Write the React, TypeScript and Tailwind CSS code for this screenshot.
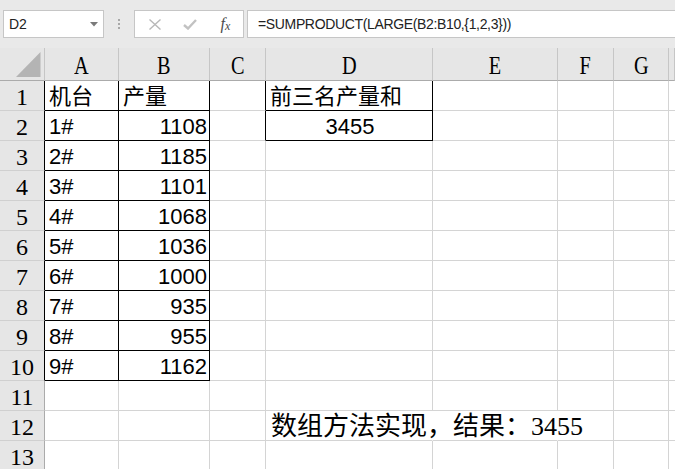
import React from "react";

const COLS = ["A", "B", "C", "D", "E", "F", "G", ""];
const GRID = "grid grid-cols-[45px_74px_91px_56px_167px_125px_56px_55px_1fr]";

const isBlack = (c: number, r: number) =>
  (c >= 1 && c <= 2 && r >= 1 && r <= 10) || (c === 4 && r >= 1 && r <= 2);

const A = ["机台", "1#", "2#", "3#", "4#", "5#", "6#", "7#", "8#", "9#"];
const B = ["产量", "1108", "1185", "1101", "1068", "1036", "1000", "935", "955", "1162"];

const sans = "font-['Liberation_Sans','Noto_Sans_CJK_SC',sans-serif] text-[22px] leading-[22px] text-black";
const serifHead = "font-['Liberation_Serif','Noto_Sans_CJK_SC',serif] text-black";

function Cell({ c, r }: { c: number; r: number }) {
  const rightBlack = isBlack(c, r) || isBlack(c + 1, r);
  const bottomBlack = isBlack(c, r) || isBlack(c, r + 1);
  const hideRight = r === 12 && (c === 4 || c === 5);
  const rc = hideRight ? "border-r-white" : rightBlack ? "border-r-black" : "border-r-[#d4d4d4]";
  const bc = bottomBlack ? "border-b-black" : "border-b-[#d4d4d4]";
  let content: React.ReactNode = null;
  let align = "justify-start";
  if (c === 1 && r >= 1 && r <= 10) content = A[r - 1];
  if (c === 2 && r >= 1 && r <= 10) {
    content = B[r - 1];
    align = r === 1 ? "justify-start" : "justify-end";
  }
  if (c === 4 && r === 1) content = "前三名产量和";
  if (c === 4 && r === 2) {
    content = "3455";
    align = "justify-center";
  }
  if (c === 4 && r === 12) {
    return (
      <div className={`h-[30px] border-r border-b ${rc} ${bc} flex items-end pl-[5px] pb-[0px] whitespace-nowrap overflow-visible relative z-10`}>
        <span className="font-['Liberation_Serif','Noto_Sans_CJK_SC',serif] text-[26px] leading-[26px] text-black">
          数组方法实现，结果：3455
        </span>
      </div>
    );
  }
  return (
    <div className={`h-[30px] border-r border-b ${rc} ${bc} flex items-end ${align} pl-[4px] pr-[2px] pb-[2px] whitespace-nowrap overflow-visible`}>
      {content !== null && <span className={sans}>{content}</span>}
    </div>
  );
}

export default function App() {
  const rows = Array.from({ length: 13 }, (_, i) => i + 1);
  return (
    <div className="w-[675px] h-[469px] overflow-hidden bg-white select-none">
      {/* toolbar */}
      <div className="h-[48px] bg-[#e9e9e9] flex items-start pt-[10px]">
        <div className="ml-[3px] w-[101px] h-[28px] bg-white border border-[#c6c6c6] flex items-center justify-between pl-[5px] pr-[5px]">
          <span className="font-['Liberation_Sans',sans-serif] text-[14px] text-[#222]">D2</span>
          <svg width="8" height="5" viewBox="0 0 8 5">
            <path d="M0 0 L8 0 L4 4.5 Z" fill="#7a7a7a" />
          </svg>
        </div>
        <div className="w-[30px] h-[28px] flex flex-col items-center justify-center gap-[2px]">
          <div className="w-[2px] h-[2px] bg-[#a8a8a8]" />
          <div className="w-[2px] h-[2px] bg-[#a8a8a8]" />
          <div className="w-[2px] h-[2px] bg-[#a8a8a8]" />
        </div>
        <div className="w-[110px] h-[28px] bg-white border border-[#c6c6c6] flex items-center">
          <div className="w-[37px] flex justify-center pl-[2px]">
            <svg width="12" height="11" viewBox="0 0 12 11">
              <path d="M0.5 0.5 L11.5 10.5 M11.5 0.5 L0.5 10.5" stroke="#b8b8b8" strokeWidth="1.4" />
            </svg>
          </div>
          <div className="w-[36px] flex justify-center">
            <svg width="14" height="11" viewBox="0 0 14 11">
              <path d="M1 6 L5 9.5 L13 1" stroke="#c2c2c2" strokeWidth="2.4" fill="none" />
            </svg>
          </div>
          <div className="w-[35px] flex justify-center items-end font-['Liberation_Serif',serif] italic text-[#4a4a4a]">
            <span className="text-[16px] leading-[16px]">f</span>
            <span className="text-[12px] leading-[12px]">x</span>
          </div>
        </div>
        <div className="ml-[3px] flex-1 -mr-[3px] h-[28px] bg-white border border-[#c6c6c6] flex items-center pl-[10px]">
          <span className="font-['Liberation_Sans',sans-serif] text-[14px] tracking-[-0.35px] text-[#222] whitespace-nowrap">
            =SUMPRODUCT(LARGE(B2:B10,{"{"}1,2,3{"}"}))
          </span>
        </div>
      </div>

      {/* column headers */}
      <div className={`${GRID} h-[33px] bg-[#e6e6e6]`}>
        <div className="border-r border-r-[#c6c6c6] border-b border-b-[#ababab] relative">
          <svg className="absolute left-[16px] top-[4px]" width="25" height="26" viewBox="0 0 25 26">
            <path d="M24.5 0 L24.5 25 L0 25 Z" fill="#b4b4b4" />
          </svg>
        </div>
        {COLS.map((l, i) => (
          <div
            key={i}
            className="border-r border-r-[#c6c6c6] border-b border-b-[#ababab] flex items-end justify-center pb-[1px]"
          >
            <span className={`${serifHead} inline-block text-[26px] leading-[26px] scale-x-[0.78]`}>{l}</span>
          </div>
        ))}
      </div>

      {/* rows */}
      {rows.map((r) => (
        <div key={r} className={`${GRID}`}>
          <div
            className={`h-[30px] bg-[#e6e6e6] border-b border-b-[#d0d0d0] border-r ${
              isBlack(1, r) ? "border-r-black" : "border-r-[#ababab]"
            } flex items-end justify-center pb-[1px]`}
          >
            <span className={`${serifHead} text-[24px] leading-[24px]`}>{r}</span>
          </div>
          {COLS.map((_, ci) => (
            <Cell key={ci} c={ci + 1} r={r} />
          ))}
        </div>
      ))}
    </div>
  );
}
